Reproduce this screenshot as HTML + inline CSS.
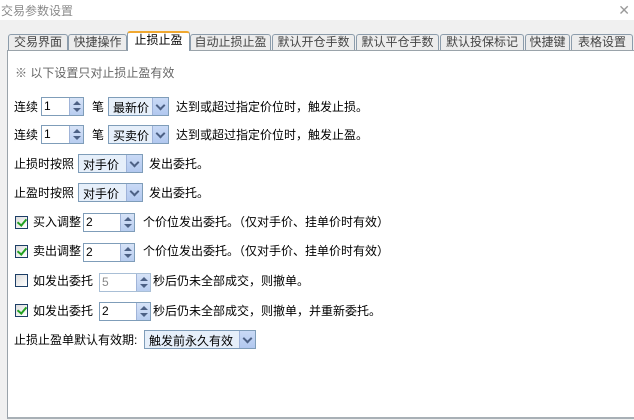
<!DOCTYPE html><html><head><meta charset="utf-8"><style>
*{margin:0;padding:0;box-sizing:border-box}
body{width:634px;height:420px;background:#f0f0f0;position:relative;overflow:hidden;font:12px "Liberation Sans","Noto Sans CJK SC",sans-serif;color:#000}
.a{position:absolute;white-space:nowrap}
.title{left:0;top:0;width:634px;height:20px;background:#fff;color:#8a8a8a;padding:2px 0 0 1px}
.x{right:4px;top:2px;color:#999;font-size:14px}
.tab{position:absolute;top:34px;height:17px;background:#ececec;border:1px solid #8c9cab;border-bottom:none;border-radius:3px 3px 0 0;color:#444;text-align:center;line-height:15px;font-size:12px}
.tab.on{top:31px;height:20px;background:#fff;border-top:2px solid #f0a830;color:#000;z-index:2}
.panel{position:absolute;left:7px;top:50px;width:630px;height:369px;background:#fff;border:1px solid #9aa3aa;border-bottom:2px solid #a8b0b6;border-right:none}
.sp{position:absolute;height:19px;border:1px solid #7f9db9;background:#fff}
.sp span{position:absolute;left:2px;top:1px;font-size:12px}
.sp b{position:absolute;right:0;top:0;width:14px;height:17px;background:linear-gradient(#d7e3f7,#b8cdf0);border-left:1px solid #a0b4d8}
.sp b:before{content:"";position:absolute;left:3px;top:3px;border:4px solid transparent;border-bottom:4px solid #4d6185;border-top:0}
.sp b:after{content:"";position:absolute;left:3px;top:10px;border:4px solid transparent;border-top:4px solid #4d6185;border-bottom:0}
.sel{position:absolute;height:19px;border:1px solid #7f9db9;background:#e6effa}
.sel span{position:absolute;left:4px;top:1px}
.sel b{position:absolute;right:0;top:0;width:16px;height:17px;background:linear-gradient(#c9daf6,#b2c8ef);border-left:1px solid #9fb3d9}
.sel b:after{content:"";position:absolute;left:4px;top:4px;width:5px;height:5px;border-right:2px solid #4d6185;border-bottom:2px solid #4d6185;transform:rotate(45deg)}
.cb{position:absolute;width:13px;height:13px;border:1px solid #1c3e66;background:linear-gradient(135deg,#dcdcdc,#fff)}
.cb.c:after{content:"";position:absolute;left:3px;top:0px;width:4px;height:7px;border-right:2px solid #21a121;border-bottom:2px solid #21a121;transform:rotate(40deg)}
</style></head><body>
<div class="a title">交易参数设置</div><div class="a x">✕</div>
<div class="tab" style="left:8px;width:60px">交易界面</div>
<div class="tab" style="left:68px;width:59px">快捷操作</div>
<div class="tab on" style="left:127px;width:63px">止损止盈</div>
<div class="tab" style="left:190px;width:81px">自动止损止盈</div>
<div class="tab" style="left:272px;width:83px">默认开仓手数</div>
<div class="tab" style="left:356px;width:83px">默认平仓手数</div>
<div class="tab" style="left:440px;width:84px">默认投保标记</div>
<div class="tab" style="left:525px;width:45px">快捷键</div>
<div class="tab" style="left:571px;width:62px">表格设置</div>
<div class="panel"></div>
<div class="a" style="left:15px;top:64px;color:#666">※ 以下设置只对止损止盈有效</div>

<div class="a" style="left:14px;top:98px">连续</div>
<div class="sp" style="left:41px;top:97px;width:43px"><span>1</span><b></b></div>
<div class="a" style="left:92px;top:98px">笔</div>
<div class="sel" style="left:108px;top:97px;width:61px"><span>最新价</span><b></b></div>
<div class="a" style="left:176px;top:98px">达到或超过指定价位时，触发止损。</div>

<div class="a" style="left:14px;top:126px">连续</div>
<div class="sp" style="left:41px;top:125px;width:43px"><span>1</span><b></b></div>
<div class="a" style="left:92px;top:126px">笔</div>
<div class="sel" style="left:108px;top:125px;width:61px"><span>买卖价</span><b></b></div>
<div class="a" style="left:176px;top:126px">达到或超过指定价位时，触发止盈。</div>

<div class="a" style="left:14px;top:155px">止损时按照</div>
<div class="sel" style="left:78px;top:154px;width:65px"><span>对手价</span><b></b></div>
<div class="a" style="left:149px;top:155px">发出委托。</div>

<div class="a" style="left:14px;top:184px">止盈时按照</div>
<div class="sel" style="left:78px;top:183px;width:65px"><span>对手价</span><b></b></div>
<div class="a" style="left:149px;top:184px">发出委托。</div>

<div class="cb c" style="left:15px;top:216px"></div>
<div class="a" style="left:33px;top:213px">买入调整</div>
<div class="sp" style="left:83px;top:213px;width:52px"><span>2</span><b></b></div>
<div class="a" style="left:143px;top:213px">个价位发出委托。（仅对手价、挂单价时有效）</div>

<div class="cb c" style="left:15px;top:245px"></div>
<div class="a" style="left:33px;top:242px">卖出调整</div>
<div class="sp" style="left:83px;top:243px;width:52px"><span>2</span><b></b></div>
<div class="a" style="left:143px;top:242px">个价位发出委托。（仅对手价、挂单价时有效）</div>

<div class="cb" style="left:15px;top:274px"></div>
<div class="a" style="left:33px;top:272px">如发出委托</div>
<div class="sp" style="left:99px;top:273px;width:52px;border-color:#a9bfd6"><span style="color:#888">5</span><b></b></div>
<div class="a" style="left:153px;top:272px">秒后仍未全部成交，则撤单。</div>

<div class="cb c" style="left:15px;top:304px"></div>
<div class="a" style="left:33px;top:302px">如发出委托</div>
<div class="sp" style="left:99px;top:302px;width:52px"><span>2</span><b></b></div>
<div class="a" style="left:153px;top:302px">秒后仍未全部成交，则撤单，并重新委托。</div>

<div class="a" style="left:14px;top:331px">止损止盈单默认有效期:</div>
<div class="sel" style="left:144px;top:330px;width:112px"><span>触发前永久有效</span><b></b></div>
</body></html>
